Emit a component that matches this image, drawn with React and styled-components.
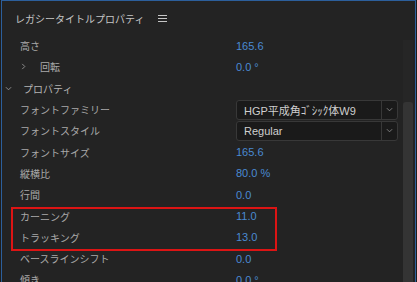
import React from 'react';
import styled, { createGlobalStyle } from 'styled-components';

const GlobalStyle = createGlobalStyle`
  html, body {
    margin: 0;
    padding: 0;
    background: #1d1d1d;
  }
`;

const JP = `"Noto Sans CJK JP", "Noto Sans", sans-serif`;
const LATIN = `"Liberation Sans", "Noto Sans CJK JP", sans-serif`;

const Frame = styled.div`
  width: 417px;
  height: 282px;
  padding: 0 1px;
  box-sizing: border-box;
  overflow: hidden;
`;

const Panel = styled.div`
  position: relative;
  height: 100%;
  background: #232323;
  border: 1px solid #2c5f9c;
  border-bottom: none;
  box-sizing: border-box;
  display: flex;
  flex-direction: column;
`;

const Header = styled.div`
  height: 34px;
  flex: none;
  display: flex;
  align-items: center;
  gap: 14px;
  padding-left: 13px;
  font-family: ${JP};
  font-size: 10px;
  color: #c6c6c6;
`;

const Body = styled.div`
  flex: 1;
  display: flex;
  min-height: 0;
`;

const Content = styled.div`
  flex: 1;
  display: flex;
  flex-direction: column;
`;

const Row = styled.div`
  height: 21.3px;
  flex: none;
  display: flex;
  align-items: center;
  padding-left: ${p => p.$indent || 18}px;
`;

const Label = styled.div`
  width: ${p => p.$width || 216}px;
  display: flex;
  align-items: center;
  gap: ${p => p.$gap || 0}px;
  font-family: ${JP};
  font-size: 10px;
  color: #a9a9a9;
  white-space: nowrap;
`;

const Value = styled.div`
  font-family: ${LATIN};
  font-size: 11px;
  color: #4a8ad2;
  white-space: nowrap;
`;

const Select = styled.div`
  width: 162px;
  height: 20px;
  box-sizing: border-box;
  display: flex;
  background: #1a1a1a;
  border: 1px solid #383838;
  border-radius: 3px;
`;

const SelectText = styled.div`
  flex: 1;
  display: flex;
  align-items: center;
  padding-left: 7px;
  font-family: ${LATIN};
  font-size: 11px;
  color: #cfcfcf;
  white-space: nowrap;
`;

const SelectArrow = styled.div`
  width: 15px;
  border-left: 1px solid #383838;
  display: flex;
  align-items: center;
  justify-content: center;
`;

const Track = styled.div`
  width: 10px;
  margin: 5px 2px 0 0;
  background: #262626;
  display: flex;
  flex-direction: column;
`;

const Thumb = styled.div`
  margin-top: 62px;
  flex: 1;
  background: #343434;
  border-radius: 3px 3px 0 0;
`;

const Highlight = styled.div`
  position: absolute;
  left: 9px;
  top: 206px;
  width: 266px;
  height: 44px;
  border: 2px solid #dc1414;
  box-sizing: border-box;
  pointer-events: none;
`;

const Chevron = ({ down, color = '#9a9a9a', size = 7 }) => (
  <svg width={size} height={size} viewBox="0 0 8 8" fill="none">
    <path
      d={down ? 'M1 2.5 L4 5.5 L7 2.5' : 'M2.5 1 L5.5 4 L2.5 7'}
      stroke={color}
      strokeWidth="1"
    />
  </svg>
);

const MenuIcon = () => (
  <svg width="9" height="8" viewBox="0 0 9 8">
    <path d="M0 1.5 H9 M0 4.5 H9 M0 7.5 H9" stroke="#c6c6c6" strokeWidth="1" />
  </svg>
);

const rowsTop = [
  { label: '高さ', value: '165.6' },
];

const rowsBottom = [
  { label: 'フォントサイズ', value: '165.6' },
  { label: '縦横比', value: '80.0 %' },
  { label: '行間', value: '0.0' },
  { label: 'カーニング', value: '11.0' },
  { label: 'トラッキング', value: '13.0' },
  { label: 'ベースラインシフト', value: '0.0' },
  { label: '傾き', value: '0.0 °' },
];

const DropRow = ({ label, text }) => (
  <Row>
    <Label>{label}</Label>
    <Select>
      <SelectText>{text}</SelectText>
      <SelectArrow>
        <Chevron down color="#8a8a8a" />
      </SelectArrow>
    </Select>
  </Row>
);

class App extends React.Component {
  render() {
    return (
      <Frame>
        <GlobalStyle />
        <Panel>
          <Header>
            <span>レガシータイトルプロパティ</span>
            <MenuIcon />
          </Header>
          <Body>
            <Content>
              {rowsTop.map((r, i) => (
                <Row key={i}>
                  <Label>{r.label}</Label>
                  <Value>{r.value}</Value>
                </Row>
              ))}
              <Row>
                <Label $gap={13}>
                  <Chevron />
                  <span>回転</span>
                </Label>
                <Value>0.0 °</Value>
              </Row>
              <Row $indent={3}>
                <Label $width={231} $gap={11}>
                  <Chevron down />
                  <span style={{ color: '#b4b4b4' }}>プロパティ</span>
                </Label>
              </Row>
              <DropRow label="フォントファミリー" text="HGP平成角ｺﾞｼｯｸ体W9" />
              <DropRow label="フォントスタイル" text="Regular" />
              {rowsBottom.map((r, i) => (
                <Row key={i}>
                  <Label>{r.label}</Label>
                  <Value>{r.value}</Value>
                </Row>
              ))}
            </Content>
            <Track>
              <Thumb />
            </Track>
          </Body>
          <Highlight />
        </Panel>
      </Frame>
    );
  }
}

export default App;
